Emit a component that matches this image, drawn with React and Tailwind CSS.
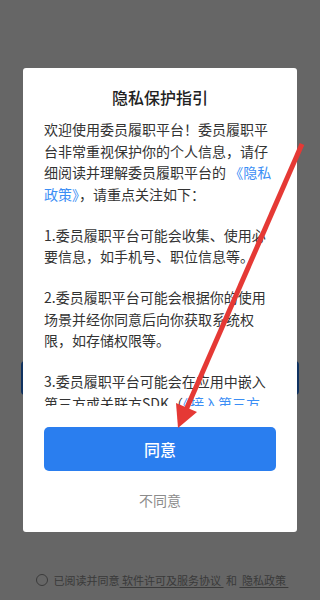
const FONT = '"Noto Sans CJK SC", "Noto Sans", sans-serif';

const PARAGRAPHS = [
  [
    { text: '欢迎使用委员履职平台！委员履职平台非常重视保护你的个人信息，请仔细阅读并理解委员履职平台的 ' },
    { text: '《隐私政策》', link: true },
    { text: '，请重点关注如下：' },
  ],
  [{ text: '1.委员履职平台可能会收集、使用必要信息，如手机号、职位信息等。' }],
  [{ text: '2.委员履职平台可能会根据你的使用场景并经你同意后向你获取系统权限，如存储权限等。' }],
  [
    { text: '3.委员履职平台可能会在应用中嵌入第三方或关联方SDK（' },
    { text: '《接入第三方SDK目录》', link: true },
    { text: '），用于实现相应功能。' },
  ],
];

const Arrow = () => (
  <svg className="pointer-events-none absolute left-0 top-0" width="320" height="600" viewBox="0 0 320 600">
    <line x1="302" y1="144" x2="186" y2="410" stroke="#e53935" strokeWidth="5" strokeLinecap="butt" />
    <polygon points="178,428 197,412 176,403" fill="#e53935" />
  </svg>
);

const App = () => {
  return (
    <div className="relative h-[600px] w-[320px] overflow-hidden bg-white" style={{ fontFamily: FONT }}>
      {/* page underneath */}
      <div className="flex h-full flex-col px-[21px] pt-[361px]">
        <div className="h-[34px] rounded-[4px] bg-[#2a7eef]" />
        <div className="mt-auto mb-[12px] flex items-center justify-center gap-[6px] pl-[4px] text-[11px] leading-[16px] text-[#929292]">
          <span className="h-[12px] w-[12px] rounded-full border border-[#929292]" />
          <span>
            已阅读并同意
            <span className="underline underline-offset-2">&nbsp;软件许可及服务协议&nbsp;</span>
            &nbsp;和&nbsp;
            <span className="underline underline-offset-2">&nbsp;隐私政策&nbsp;</span>
          </span>
        </div>
      </div>

      {/* dim overlay + dialog */}
      <div className="absolute inset-0 bg-black/60 pt-[68px]">
        <div className="mx-auto flex w-[274px] flex-col rounded-[3px] bg-white px-[21px] pt-[17px] pb-[22px]">
          <h2 className="text-center text-[16px] font-medium leading-[24px] text-[#222]">隐私保护指引</h2>
          <div className="mt-[10px] h-[287px] overflow-hidden text-[14px] leading-[21.5px] text-[#333]">
            {PARAGRAPHS.map((parts, index) => (
              <p key={index} className={index > 0 ? 'mt-[19.5px]' : ''}>
                {parts.map((part, i) =>
                  part.link ? (
                    <span key={i} className="text-[#3b8ef5]">
                      {part.text}
                    </span>
                  ) : (
                    <span key={i}>{part.text}</span>
                  )
                )}
              </p>
            ))}
          </div>
          <button className="mt-[21px] h-[44px] w-full rounded-[5px] bg-[#2a7eef] text-[16px] font-medium text-white">
            同意
          </button>
          <div className="mt-[19px] text-center text-[14px] leading-[20px] text-[#8c8c8c]">不同意</div>
        </div>
      </div>

      <Arrow />
    </div>
  );
};

export default App;
